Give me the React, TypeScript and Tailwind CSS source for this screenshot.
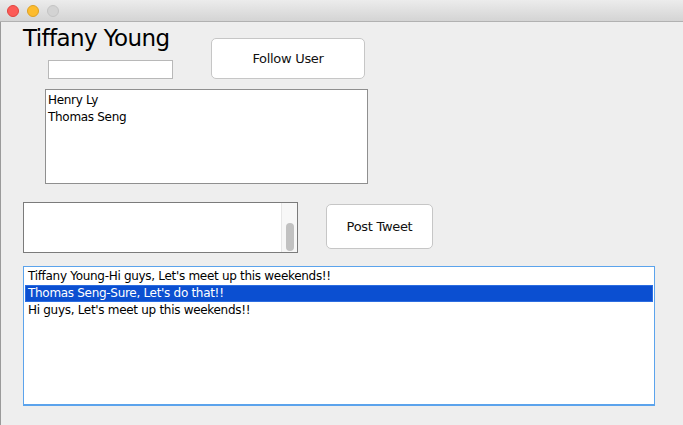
const tweets = [
  'Tiffany Young-Hi guys, Let\'s meet up this weekends!!',
  'Thomas Seng-Sure, Let\'s do that!!',
  'Hi guys, Let\'s meet up this weekends!!',
];

const following = ['Henry Ly', 'Thomas Seng'];

function TitleBar() {
  return (
    <div className="flex h-[22px] items-center gap-[8px] border-b border-[#b1b1b1] bg-gradient-to-b from-[#ececec] to-[#d4d4d4] pl-[7px]">
      <span className="size-[12px] rounded-full border border-[#e0443e] bg-[#fc5b57]" />
      <span className="size-[12px] rounded-full border border-[#dea123] bg-[#fdbc2e]" />
      <span className="size-[12px] rounded-full border border-[#c4c4c4] bg-[#d3d3d3]" />
    </div>
  );
}

export default function App() {
  return (
    <div className="h-[425px] w-[683px] overflow-hidden bg-[#eeeeee] font-['DejaVu_Sans',sans-serif] text-[12px] tracking-[-0.3px] text-black">
      <TitleBar />
      <div className="h-[403px] border-l border-[#9a9a9a] pl-[22px]">
        <div className="flex items-start">
          <div className="flex w-[188px] flex-col">
            <div className="h-[38px] pt-[1px] text-[23px] leading-[30px] tracking-[-0.6px]">
              Tiffany Young
            </div>
            <div className="ml-[25px] h-[19px] w-[125px] border border-[#b8b8b8] bg-white" />
          </div>
          <button className="mt-[16px] flex h-[41px] w-[154px] items-center justify-center rounded-[5px] border border-[#c6c6c6] bg-white text-[13px] text-[#111]">
            Follow User
          </button>
        </div>

        <div className="ml-[22px] mt-[10px] h-[95px] w-[323px] border border-[#8f8f8f] bg-white px-[2px] pt-[2px]">
          {following.map((name) => (
            <div key={name} className="h-[17px] leading-[17px]">
              {name}
            </div>
          ))}
        </div>

        <div className="mt-[18px] flex items-start">
          <div className="flex h-[51px] w-[275px] border border-[#7b7b7b] bg-white">
            <div className="flex-1" />
            <div className="flex w-[16px] items-end justify-center border-l border-[#e6e6e6] bg-[#f7f7f7] pb-[1px]">
              <div className="h-[28px] w-[8px] rounded-full bg-[#c1c1c1]" />
            </div>
          </div>
          <button className="ml-[28px] mt-[2px] flex h-[45px] w-[107px] items-center justify-center rounded-[5px] border border-[#c6c6c6] bg-white text-[13px] text-[#111]">
            Post Tweet
          </button>
        </div>

        <div className="mt-[13px] h-[140px] w-[632px] border border-b-2 border-[#5ba3ec] bg-white pt-[1px] pl-[1px] pr-[1px]">
          {tweets.map((t, i) => (
            <div
              key={i}
              className={
                i === 1
                  ? 'h-[17px] border border-[#2c6de0] bg-[#0b4fd1] pl-[2px] leading-[15px] text-white'
                  : 'h-[17px] pl-[3px] leading-[17px]'
              }
            >
              {t}
            </div>
          ))}
        </div>
      </div>
    </div>
  );
}
